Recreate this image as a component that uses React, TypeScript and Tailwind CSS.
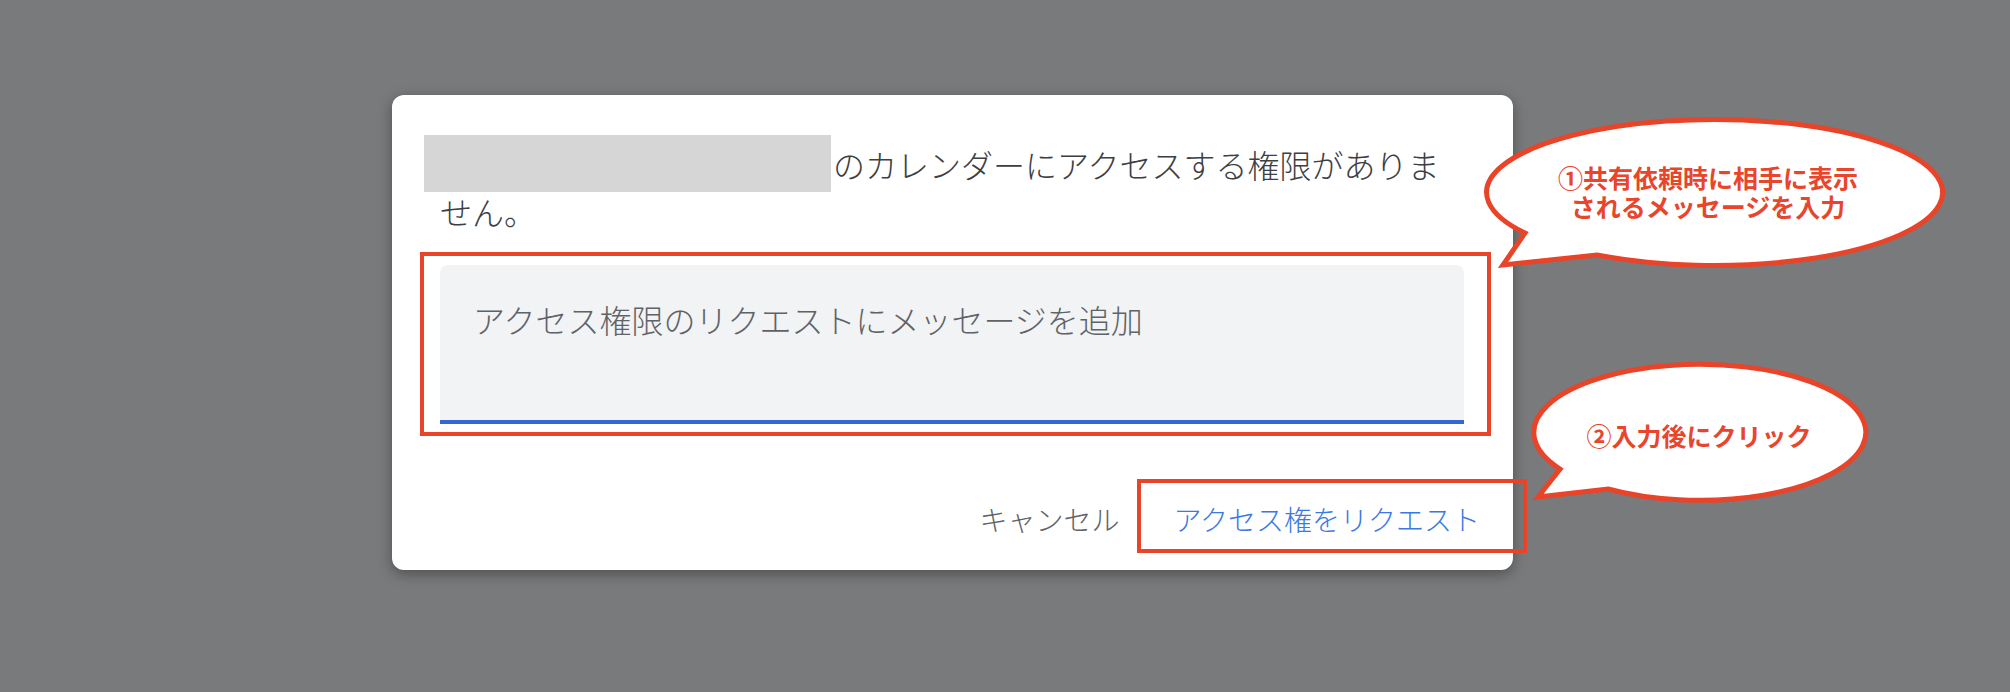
import React from "react";

const jp = { fontFamily: '"Noto Sans CJK JP", "Noto Sans", sans-serif' };

export default function App() {
  return (
    <div
      className="relative w-[2010px] h-[692px] overflow-hidden bg-[#797a7c] pl-[392px] pt-[95px]"
      style={jp}
    >
      {/* Dialog */}
      <div className="relative flex h-[475px] w-[1121px] flex-col rounded-[12px] bg-white px-[48px] pt-[40px] pb-[31px] shadow-[0_4px_14px_rgba(0,0,0,0.35)]">
        <div className="flex h-[57px] items-center text-[32px] font-light text-[#3c4043]">
          <div className="-ml-[16px] mr-[2px] h-[57px] w-[407px] bg-[#d6d6d6]" />
          <span className="leading-[40px]">のカレンダーにアクセスする権限がありま</span>
        </div>
        <div className="text-[32px] font-light leading-[38px] text-[#3c4043]">せん。</div>

        <div className="mt-[35px] h-[159px] w-[1024px] rounded-t-[8px] border-b-4 border-[#3367d6] bg-[#f1f3f4] pl-[33px] pt-[34px] text-[32px] font-light leading-[40px] text-[#5f6368]">
          アクセス権限のリクエストにメッセージを追加
        </div>

        <div className="-mr-[27px] mt-auto flex items-center justify-end gap-[30px] text-[28px] font-light leading-[40px]">
          <button className="px-[12px] text-[#5f6368]">キャンセル</button>
          <button className="px-[12px] text-[#3a78e4]">アクセス権をリクエスト</button>
        </div>

        {/* annotation boxes */}
        <div className="absolute left-[28px] top-[157px] h-[184px] w-[1071px] border-4 border-[#e8442a]" />
        <div className="absolute left-[745px] top-[384px] h-[74px] w-[390px] border-4 border-[#e8442a]" />
      </div>

      {/* callouts */}
      <svg
        className="pointer-events-none absolute left-0 top-0"
        width="2010"
        height="692"
        viewBox="0 0 2010 692"
      >
        <path
          d="M 1597 255 A 228 73 0 1 0 1525 233 L 1503 265 Z"
          fill="#ffffff"
          stroke="#e8442a"
          strokeWidth="5"
          strokeLinejoin="miter"
        />
        <path
          d="M 1608 489 A 166 68 0 1 0 1560 469 L 1538 497 Z"
          fill="#ffffff"
          stroke="#e8442a"
          strokeWidth="5"
          strokeLinejoin="miter"
        />
      </svg>
      <div className="absolute left-[1508px] top-[163px] flex w-[400px] flex-col items-center text-[25px] font-bold leading-[29px] text-[#e8452c]">
        <span>①共有依頼時に相手に表示</span>
        <span>されるメッセージを入力</span>
      </div>
      <div className="absolute left-[1499px] top-[421px] w-[400px] text-center text-[25px] font-bold leading-[29px] text-[#e8452c]">
        ②入力後にクリック
      </div>
    </div>
  );
}
